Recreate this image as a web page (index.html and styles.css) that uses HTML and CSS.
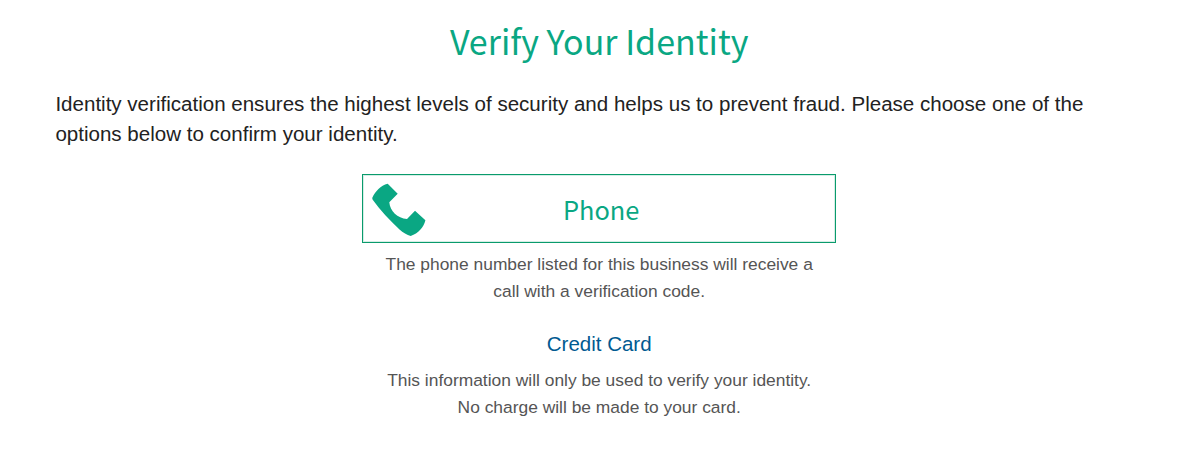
FILE: index.html
```html
<!DOCTYPE html>
<html lang="en">
<head>
    <meta charset="UTF-8">
    <meta name="viewport" content="width=device-width, initial-scale=1.0">
    <title>Verify Your Identity</title>
    <link rel="stylesheet" href="styles.css">
</head>
<body>
    <div class="container">
        <h1>Verify Your Identity</h1>
        <p class="intro">
            Identity verification ensures the highest levels of security and helps us to prevent fraud. Please choose one of the
            <br>options below to confirm your identity.
        </p>
        <div class="options">
            <button class="phone-button" type="button">
                <svg class="phone-icon" viewBox="0 0 55 55" aria-hidden="true">
                    <path d="M0.3 16.7 C3.5 10 8.5 4.6 15.7 2.7 L25.7 12.7 L17.3 21.3 C18 30 25.5 37.5 35 38 L43 29.7 L53.4 39.3 C51.5 46.5 46.5 52.5 38.7 55 C35 54 31 51.7 27.5 48.5 C17.5 39 8 29 0.9 19 Q0.1 18 0.3 16.7 Z"/>
                </svg>
                <span class="phone-label">Phone</span>
            </button>
            <p class="note phone-note">The phone number listed for this business will receive a <br>call with a verification code.</p>
            <a class="card-link" href="#">Credit Card</a>
            <p class="note card-note">This information will only be used to verify your identity. <br>No charge will be made to your card.</p>
        </div>
    </div>
</body>
</html>
```
FILE: styles.css
```css
body {
    margin: 0;
    background-color: #fff;
    font-family: "Liberation Sans", Arial, sans-serif;
    color: #222;
}

.container {
    padding: 14px 57px 0 55.4px;
}

h1 {
    margin: 0;
    font-family: "Noto Sans CJK SC", "Noto Sans", sans-serif;
    font-size: 34px;
    font-weight: 400;
    line-height: 54px;
    text-align: center;
    color: #0aa783;
}

.intro {
    margin: 21px 0 0;
    font-size: 20.55px;
    line-height: 30px;
    white-space: nowrap;
}

.options {
    width: 474px;
    margin: 25px auto 0;
    display: flex;
    flex-direction: column;
    align-items: center;
}

.phone-button {
    box-sizing: border-box;
    width: 474px;
    height: 69px;
    padding: 0 9px;
    border: 1px solid #0a9b6c;
    box-shadow: inset 0 0 0 1px #d5eee6;
    background-color: #fff;
    display: flex;
    align-items: center;
    cursor: pointer;
}

.phone-icon {
    width: 55px;
    height: 55px;
    fill: #0aa783;
}

.phone-label {
    flex: 1;
    padding: 0 51px 0 0;
    font-family: "Noto Sans CJK SC", "Noto Sans", sans-serif;
    font-size: 25.4px;
    line-height: 40px;
    color: #0aa783;
}

.note {
    margin: 0;
    font-size: 17.4px;
    line-height: 27px;
    text-align: center;
    white-space: nowrap;
    color: #555;
}

.phone-note {
    margin-top: 8px;
}

.card-link {
    margin-top: 24px;
    font-size: 20.5px;
    line-height: 30px;
    text-decoration: none;
    color: #005a91;
}

.card-note {
    margin-top: 8px;
}
```
